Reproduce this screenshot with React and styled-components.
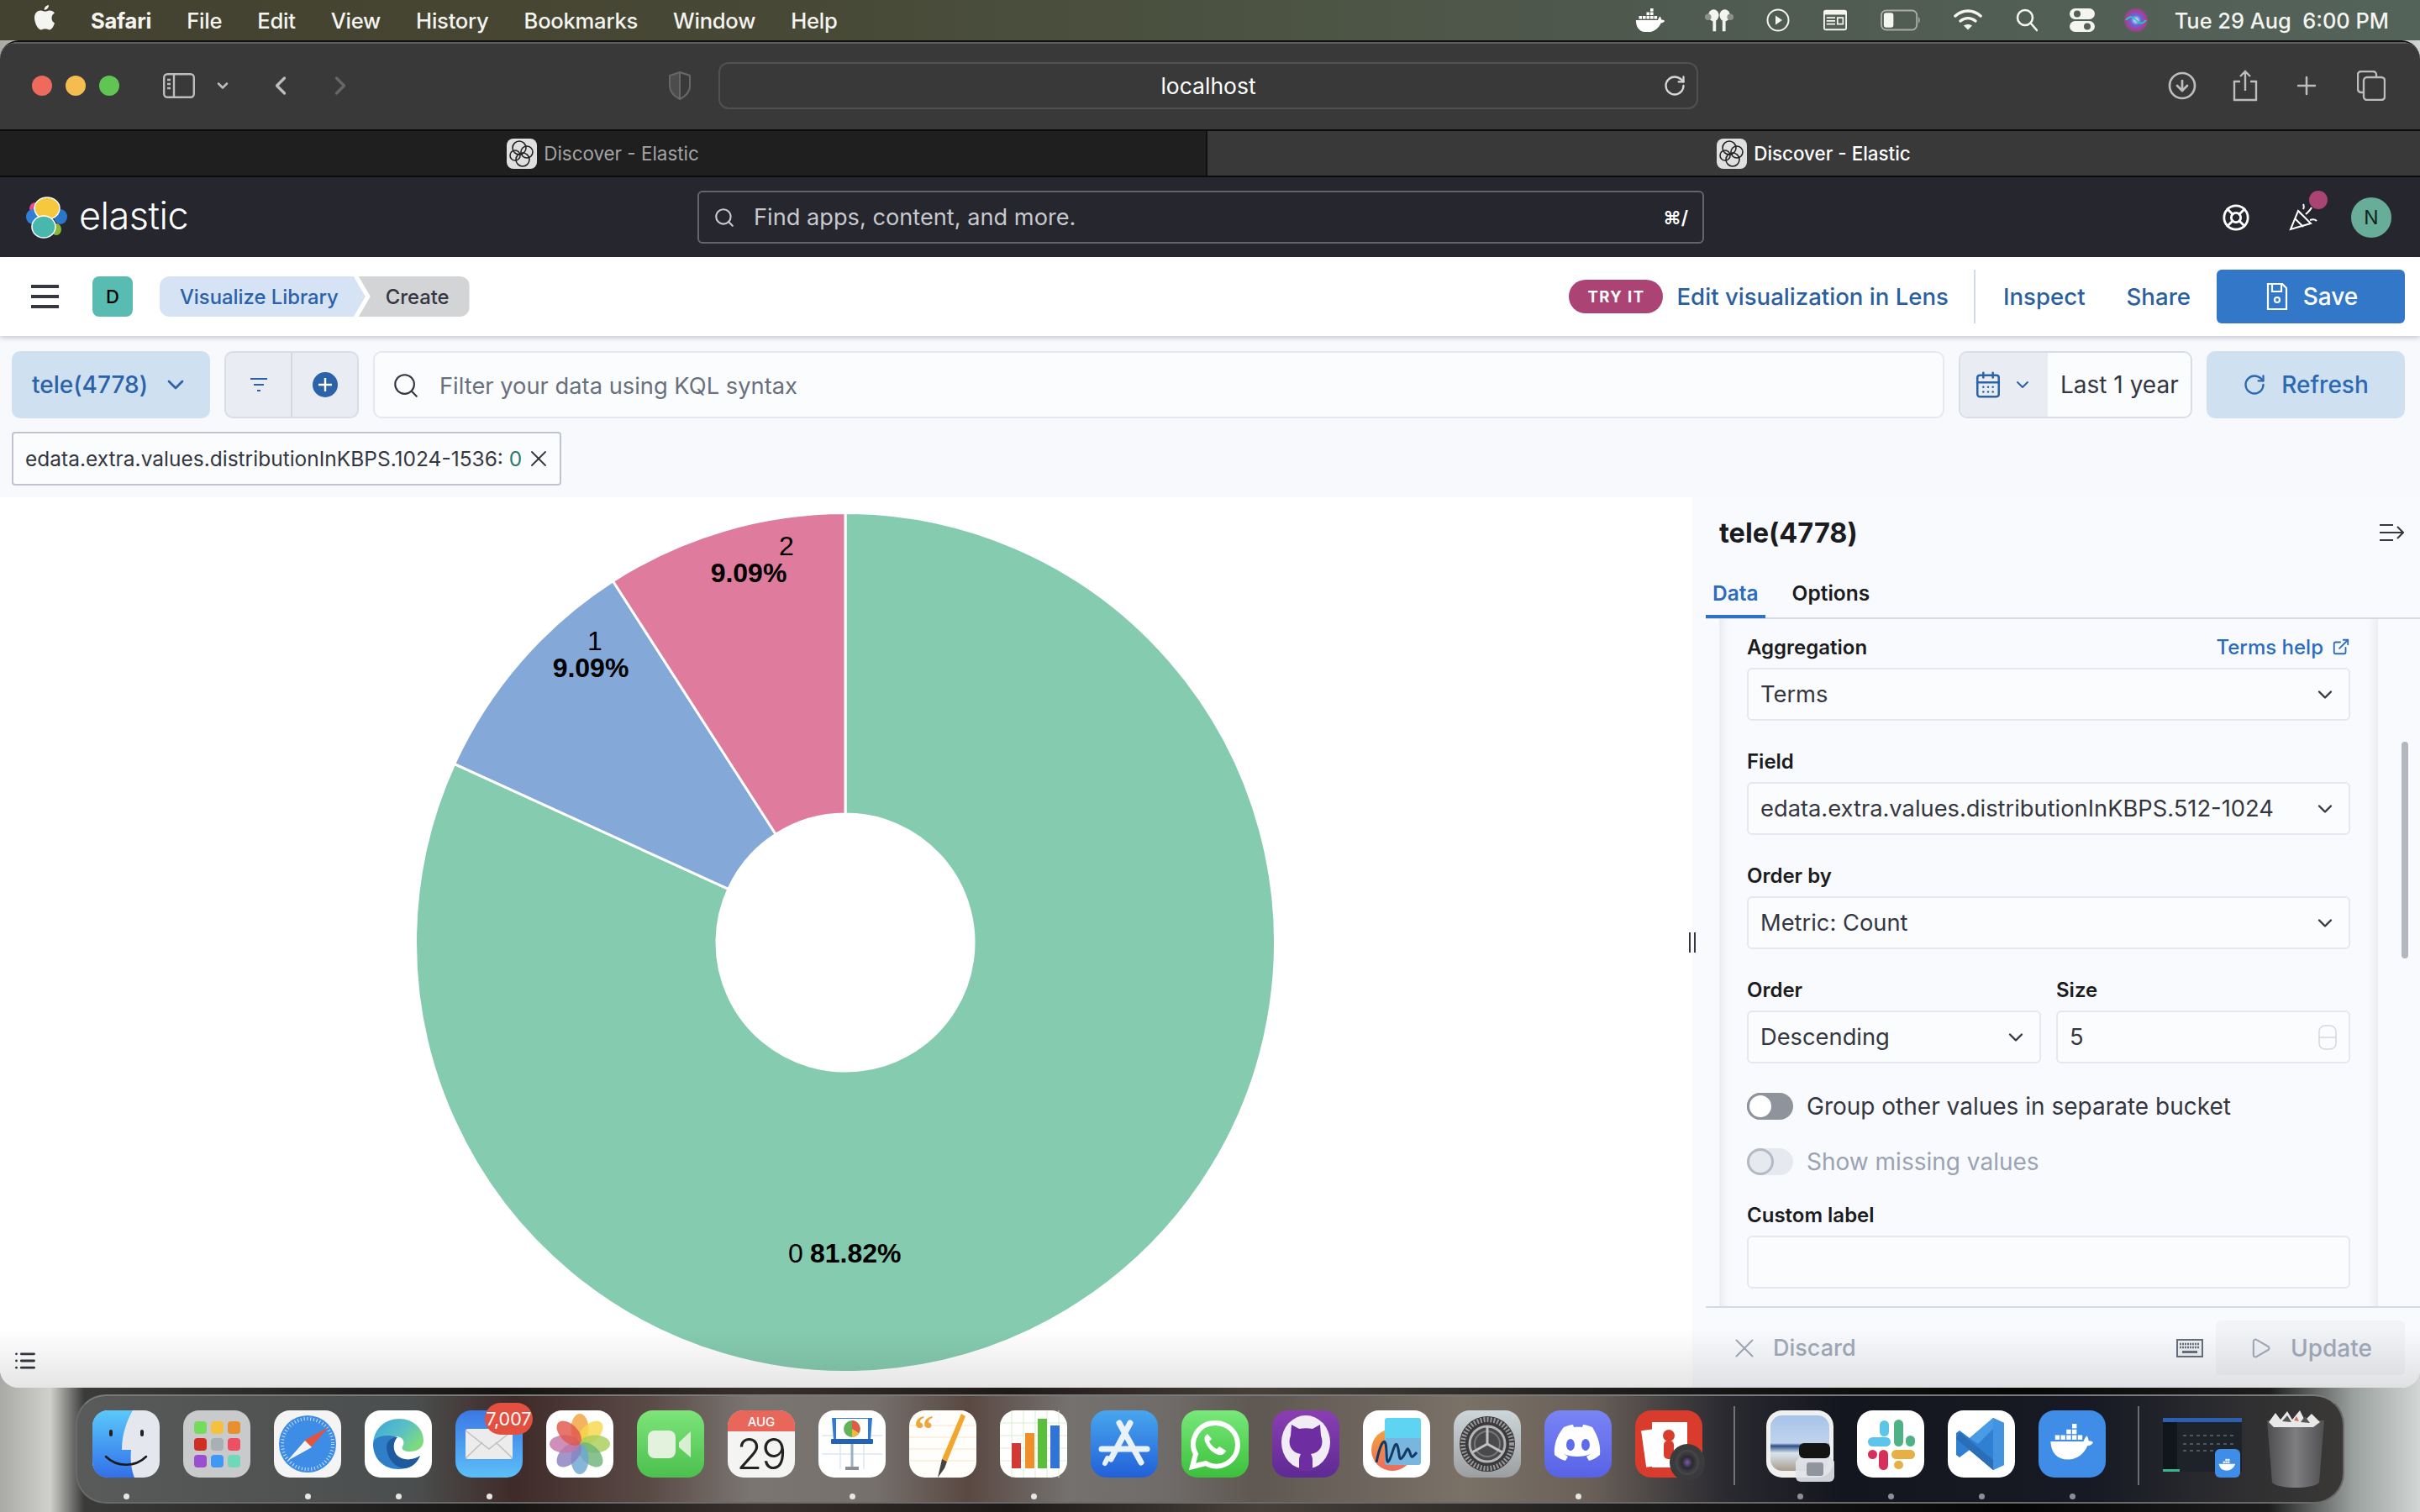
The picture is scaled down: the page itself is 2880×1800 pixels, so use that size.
import React from 'react';
import styled, { createGlobalStyle } from 'styled-components';
import {
  ChevronDown, ChevronLeft, ChevronRight, Search, RotateCw, Plus, CircleArrowDown,
  LifeBuoy, ExternalLink, X, Play, CalendarDays, List,
} from 'lucide-react';

const GlobalStyle = createGlobalStyle`
  html, body { margin: 0; padding: 0; width: 2880px; height: 1800px; overflow: hidden; }
  body { font-family: Inter, "Liberation Sans", sans-serif; }
  * { box-sizing: border-box; }
`;

const Screen = styled.div`
  width: 2880px;
  height: 1800px;
  overflow: hidden;
  display: flex;
  flex-direction: column;
  background: linear-gradient(90deg, #a9a9a6 0, #d0d0cc 60px, #3b3b3a 100px, #161412 600px, #38302c 900px,
    #1e1a18 1200px, #47403a 1500px, #181818 2000px, #060606 2400px, #1d1d1d 2700px, #9aa09e 2800px, #d2d6d4 2880px);
`;

const MenuBar = styled.div`
  height: 48px;
  flex: none;
  display: flex;
  align-items: center;
  padding: 0 37px 0 40px;
  color: #f4f4f0;
  font-size: 25.6px;
  font-weight: 500;
  background: linear-gradient(90deg, #43412f 0, #474835 900px, #4c5342 1500px, #4f5a50 2000px, #54635a 2880px);
`;

const MenuItem = styled.span`
  margin-right: 42px;
  font-weight: ${(p) => (p.$bold ? 700 : 500)};
  letter-spacing: -0.25px;
`;

const MenuTray = styled.div`
  margin-left: auto;
  display: flex;
  align-items: center;
`;

const TrayItem = styled.div`
  display: flex;
  align-items: center;
  justify-content: center;
  width: ${(p) => p.$w}px;
  margin-right: ${(p) => p.$gap}px;
`;

const Clock = styled.span`
  font-size: 25.4px;
  font-weight: 500;
  white-space: pre;
`;

const Window = styled.div`
  position: relative;
  height: 1604px;
  flex: none;
  display: flex;
  flex-direction: column;
  overflow: hidden;
  border-radius: 22px;
  border-top: 2px solid #111;
  background: #fff;
`;

const Toolbar = styled.div`
  height: 104px;
  flex: none;
  display: flex;
  align-items: center;
  background: #393939;
  border-top: 2px solid #5e5e5e;
  padding: 0 0 3px 38px;
`;

const Light = styled.span`
  width: 24px;
  height: 24px;
  border-radius: 50%;
  margin-right: ${(p) => (p.$last ? 0 : 16)}px;
  background: ${(p) => p.$c};
`;

const ToolIcon = styled.div`
  display: flex;
  align-items: center;
  justify-content: center;
  flex: none;
  width: ${(p) => p.$w}px;
  margin-left: ${(p) => p.$ml || 0}px;
  color: ${(p) => p.$c || '#bdbdbd'};
`;

const UrlField = styled.div`
  position: relative;
  width: 1166px;
  height: 56px;
  margin-left: 32px;
  display: flex;
  align-items: center;
  justify-content: center;
  border: 2px solid #515151;
  border-radius: 12px;
  color: #fff;
  font-size: 26.5px;
`;

const UrlReload = styled.span`
  position: absolute;
  right: 12px;
  top: 12px;
  color: #d6d6d6;
  display: flex;
`;

const TabBar = styled.div`
  height: 57px;
  flex: none;
  display: flex;
  border-top: 2px solid #0c0c0c;
  border-bottom: 2px solid #0c0c0c;
`;

const BrowserTab = styled.div`
  width: ${(p) => (p.$active ? 1445 : 1435)}px;
  flex: none;
  display: flex;
  align-items: center;
  justify-content: center;
  gap: 8px;
  font-size: 22.4px;
  background: ${(p) => (p.$active ? '#393939' : '#1f1f1f')};
  color: ${(p) => (p.$active ? '#fff' : '#a4a4a4')};
  font-weight: ${(p) => (p.$active ? 500 : 400)};
  border-left: ${(p) => (p.$active ? '2px solid #111' : 'none')};
`;

const AppHeader = styled.div`
  height: 95px;
  flex: none;
  position: relative;
  display: flex;
  align-items: center;
  background: #25262e;
  padding-left: 30px;
  color: #fff;
`;

const LogoWord = styled.span`
  margin-left: 14px;
  font-size: 45px;
  font-weight: 300;
  letter-spacing: -0.5px;
  width: 736px;
  line-height: 1;
  padding-bottom: 4px;
`;

const GlobalSearch = styled.div`
  width: 1198px;
  height: 63px;
  display: flex;
  align-items: center;
  padding-left: 17px;
  border: 2px solid #65666b;
  border-radius: 6px;
  color: #c8c9cc;
  font-size: 27.2px;
`;

const SearchText = styled.span`
  margin-left: 22px;
  flex: 1;
`;

const ShortcutHint = styled.span`
  margin-right: 17px;
  color: #fff;
  font-size: 22px;
  font-weight: 600;
`;

const HeaderIcons = styled.div`
  margin-left: auto;
  display: flex;
  align-items: center;
  padding-right: 34px;
`;

const CheerWrap = styled.div`
  position: relative;
  margin-left: 46px;
  display: flex;
`;

const CheerDot = styled.span`
  position: absolute;
  right: -10px;
  top: -14px;
  width: 22px;
  height: 22px;
  border-radius: 50%;
  background: #ab4474;
`;

const UserAvatar = styled.div`
  width: 48px;
  height: 48px;
  margin-left: 38px;
  border-radius: 50%;
  background: #68ad98;
  color: #10231d;
  font-size: 23px;
  display: flex;
  align-items: center;
  justify-content: center;
`;

const NavBar = styled.div`
  height: 94px;
  flex: none;
  display: flex;
  align-items: center;
  padding: 0 18px 0 37px;
  background: #fff;
  box-shadow: 0 2px 6px rgba(60, 70, 90, 0.28);
  position: relative;
  z-index: 2;
`;

const SpaceAvatar = styled.div`
  width: 48px;
  height: 48px;
  margin-left: 40px;
  border-radius: 8px;
  background: #58bcb2;
  color: #000;
  font-size: 22px;
  font-weight: 500;
  display: flex;
  align-items: center;
  justify-content: center;
`;

const Crumb = styled.div`
  height: 48px;
  display: flex;
  align-items: center;
  font-size: 23.8px;
  font-weight: 500;
  background: ${(p) => (p.$first ? '#d5e3f4' : '#d3d4d6')};
  color: ${(p) => (p.$first ? '#2b61a8' : '#343741')};
  border-radius: ${(p) => (p.$first ? '12px 0 0 12px' : '0 12px 12px 0')};
  margin-left: ${(p) => (p.$first ? '32px' : '-8px')};
  padding: ${(p) => (p.$first ? '0 32px 0 24px' : '0 24px 0 32px')};
  clip-path: ${(p) => (p.$first
    ? 'polygon(0 0, calc(100% - 14px) 0, 100% 50%, calc(100% - 14px) 100%, 0 100%)'
    : 'polygon(0 0, 100% 0, 100% 100%, 0 100%, 14px 50%)')};
`;

const NavActions = styled.div`
  margin-left: auto;
  display: flex;
  align-items: center;
  color: #2b5f9f;
  font-size: 27.6px;
  font-weight: 500;
`;

const TryBadge = styled.span`
  width: 112px;
  height: 40px;
  border-radius: 20px;
  background: #ab4474;
  color: #fff;
  font-size: 18.5px;
  font-weight: 700;
  letter-spacing: 1.4px;
  display: flex;
  align-items: center;
  justify-content: center;
  margin-right: 16px;
`;

const NavDivider = styled.span`
  width: 2px;
  height: 64px;
  background: #d3dae6;
  margin: 0 33px 0 30px;
`;

const ShareLink = styled.span`
  margin-left: 49px;
`;

const SaveButton = styled.div`
  width: 224px;
  height: 64px;
  margin-left: 31px;
  padding-left: 3px;
  border-radius: 6px;
  background: #3377c9;
  color: #fff;
  display: flex;
  align-items: center;
  justify-content: center;
  gap: 18px;
  font-size: 28px;
`;

const QueryArea = styled.div`
  height: 192px;
  flex: none;
  padding: 18px 18px 14px 14px;
  background: #f8f9fd;
`;

const QueryRow = styled.div`
  display: flex;
  height: 80px;
  gap: 17px;
`;

const DataViewButton = styled.div`
  width: 236px;
  border-radius: 10px;
  background: #cfe0f0;
  color: #2c62a8;
  font-size: 28px;
  font-weight: 500;
  display: flex;
  align-items: center;
  gap: 17px;
  padding-left: 24px;
`;

const FilterGroup = styled.div`
  width: 160px;
  display: flex;
  border: 2px solid #d9dde8;
  border-radius: 10px;
  background: #e9edf3;
`;

const FilterCell = styled.div`
  flex: 1;
  display: flex;
  align-items: center;
  justify-content: center;
  border-left: ${(p) => (p.$divided ? '2px solid #d3d8e2' : 'none')};
`;

const QueryInput = styled.div`
  flex: 1;
  display: flex;
  align-items: center;
  gap: 23px;
  padding: 2px 0 0 20px;
  border: 2px solid #e5e8f0;
  border-radius: 10px;
  background: #fbfcfe;
  color: #69707d;
  font-size: 27.3px;
`;

const DateGroup = styled.div`
  width: 278px;
  display: flex;
  border: 2px solid #d9dde8;
  border-radius: 10px;
  overflow: hidden;
  background: #fbfcfe;
  color: #343741;
  font-size: 28px;
`;

const DateIcons = styled.div`
  width: 104px;
  background: #e9edf3;
  display: flex;
  align-items: center;
  gap: 12px;
  padding-left: 16px;
`;

const DateText = styled.div`
  flex: 1;
  display: flex;
  align-items: center;
  padding-left: 15px;
  white-space: nowrap;
`;

const RefreshButton = styled.div`
  width: 236px;
  border-radius: 10px;
  background: #cfe0f0;
  color: #2d69b3;
  font-size: 28px;
  font-weight: 500;
  display: flex;
  align-items: center;
  justify-content: center;
  gap: 18px;
`;

const FilterPill = styled.div`
  width: 654px;
  height: 64px;
  margin-top: 16px;
  display: flex;
  align-items: center;
  gap: 4px;
  padding-left: 14px;
  border: 2px solid #bfc4d0;
  border-radius: 4px;
  background: #fbfcfe;
  color: #343741;
  font-size: 24.5px;
  white-space: nowrap;
`;

const PillValue = styled.span`
  color: #2b7a6a;
`;

const Main = styled.div`
  flex: 1;
  min-height: 0;
  display: flex;
`;

const ChartPanel = styled.div`
  position: relative;
  width: 2014px;
  flex: none;
  display: flex;
  align-items: center;
  justify-content: center;
  background: #fff;
`;

const LegendToggle = styled.span`
  position: absolute;
  left: 16px;
  bottom: 18px;
  color: #343741;
  display: flex;
`;

const ResizeGrip = styled.span`
  position: absolute;
  right: -4px;
  top: 518px;
  width: 8px;
  height: 24px;
  border-left: 2px solid #343741;
  border-right: 2px solid #343741;
`;

const SidePanel = styled.div`
  flex: 1;
  display: flex;
  flex-direction: column;
  min-width: 0;
  background: #f9fafd;
`;

const PanelTitle = styled.div`
  height: 84px;
  flex: none;
  display: flex;
  align-items: center;
  justify-content: space-between;
  padding: 0 19px 0 32px;
  color: #1a1c21;
  font-size: 32.5px;
  font-weight: 700;
`;

const Tabs = styled.div`
  height: 61px;
  flex: none;
  margin-left: 16px;
  display: flex;
  gap: 24px;
  border-bottom: 2px solid #d3dae6;
`;

const Tab = styled.div`
  padding: 0 8px;
  height: 60px;
  display: flex;
  align-items: center;
  font-size: 24.5px;
  font-weight: 600;
  color: ${(p) => (p.$active ? '#2b6cbf' : '#1a1c21')};
  border-bottom: ${(p) => (p.$active ? '4px solid #2f72c4' : 'none')};
  padding-top: ${(p) => (p.$active ? '4px' : '0')};
`;

const PanelBody = styled.div`
  position: relative;
  flex: 1;
  min-height: 0;
  overflow: hidden;
`;

const Card = styled.div`
  width: 784px;
  height: 100%;
  margin-left: 32px;
  padding: 17px 33px 0;
  box-shadow: inset 16px 0 12px -12px rgba(70, 80, 100, 0.1), inset -16px 0 12px -12px rgba(70, 80, 100, 0.1);
  display: flex;
  flex-direction: column;
`;

const ScrollThumb = styled.span`
  position: absolute;
  right: 14px;
  top: 146px;
  width: 8px;
  height: 258px;
  border-radius: 4px;
  background: #b3b7bf;
`;

const Field = styled.div`
  flex: ${(p) => (p.$half ? 1 : 'none')};
  min-width: 0;
  margin-bottom: ${(p) => (p.$gap === undefined ? 32 : p.$gap)}px;
`;

const LabelRow = styled.div`
  height: 32px;
  margin-bottom: 9px;
  display: flex;
  align-items: center;
  justify-content: space-between;
  color: #1a1c21;
  font-size: 24px;
  font-weight: 600;
`;

const HelpLink = styled.span`
  display: flex;
  align-items: center;
  gap: 10px;
  color: #2a6cbf;
  font-weight: 500;
`;

const Select = styled.div`
  height: 63px;
  display: flex;
  align-items: center;
  justify-content: space-between;
  padding: 0 14px 0 14px;
  border: 2px solid #e5e8f0;
  border-radius: 6px;
  background: #fbfcfe;
  color: #343741;
  font-size: 27.3px;
  white-space: nowrap;
`;

const TwoCols = styled.div`
  display: flex;
  gap: 18px;
`;

const Switch = styled.div`
  height: 32px;
  margin-bottom: ${(p) => p.$gap}px;
  display: flex;
  align-items: center;
  gap: 16px;
  font-size: 28px;
  color: ${(p) => (p.$off ? '#9aa3b4' : '#343741')};
`;

const SwitchTrack = styled.span`
  width: 55px;
  height: 32px;
  border-radius: 16px;
  background: ${(p) => (p.$off ? '#e6e9f0' : '#8f939c')};
  display: flex;
`;

const SwitchKnob = styled.span`
  width: 32px;
  height: 32px;
  border-radius: 50%;
  border: 3px solid ${(p) => (p.$off ? '#b4b9c4' : '#8f939c')};
  background: ${(p) => (p.$off ? '#e6e9f0' : '#fff')};
`;

const PanelFooter = styled.div`
  height: 97px;
  flex: none;
  margin-left: 16px;
  display: flex;
  align-items: center;
  padding: 0 18px 0 27px;
  border-top: 2px solid #d3dae6;
  color: #a2abba;
  font-size: 27px;
  font-weight: 500;
`;

const DiscardLabel = styled.span`
  display: flex;
  align-items: center;
  gap: 15px;
  margin-right: auto;
`;

const UpdateButton = styled.div`
  width: 225px;
  height: 65px;
  margin-left: 15px;
  border-radius: 6px;
  background: #f1f3f7;
  font-size: 28px;
  display: flex;
  align-items: center;
  justify-content: center;
  gap: 22px;
`;

const BottomShade = styled.div`
  position: absolute;
  left: 0;
  right: 0;
  bottom: 0;
  height: 70px;
  pointer-events: none;
  z-index: 3;
  background: linear-gradient(180deg, rgba(0, 0, 0, 0), rgba(0, 0, 0, 0.1));
`;

const Dock = styled.div`
  width: 2700px;
  height: 130px;
  flex: none;
  margin: 8px 0 0 90px;
  padding: 17px 0 0 18px;
  display: flex;
  gap: 28px;
  border: 2px solid #6a6a6a;
  border-top-color: #7a7a7a;
  border-radius: 36px;
  background: linear-gradient(90deg, #595a5a 0, #4b4e4e 400px, #3f2b29 520px, #5a4a46 680px, #7a7571 800px,
    #75706c 950px, #5a4842 1060px, #74716f 1180px, #6f6b68 1300px, #5f5852 1400px, #7a7167 1650px,
    #6a6058 1800px, #2a2a30 1960px, #14161f 2100px, #171a24 2400px, #2d2d30 2560px, #3a3937 2700px);
`;

const DockItem = styled.div`
  position: relative;
  width: ${(p) => p.$w || 80}px;
  flex: none;
  display: flex;
  flex-direction: column;
  align-items: center;
`;

const DockTile = styled.div`
  width: ${(p) => p.$w || 80}px;
  height: 80px;
  flex: none;
  display: flex;
  svg { overflow: visible; }
`;

const RunDot = styled.span`
  width: 7px;
  height: 7px;
  margin-top: 19px;
  border-radius: 50%;
  background: ${(p) => (p.$dim ? '#8d8f96' : '#e6e6e4')};
  visibility: ${(p) => (p.$on ? 'visible' : 'hidden')};
`;

const MailBadge = styled.span`
  position: absolute;
  left: 35px;
  top: -9px;
  width: 57px;
  height: 38px;
  border-radius: 19px;
  background: #e4503f;
  color: #fff;
  font-size: 21.5px;
  display: flex;
  align-items: center;
  justify-content: center;
`;

const DockSeparator = styled.span`
  width: 2px;
  height: 94px;
  margin: -5px ${(p) => p.$right}px 0 ${(p) => p.$left}px;
  background: rgba(255, 255, 255, 0.35);
`;

function AppleLogo() {
  return (
    <svg width="26" height="32" viewBox="0 0 26 32" fill="#f4f4f0">
      <path d="M18 1c.3 3-2.400 6-5.200 5.800C12.400 4 15 1.300 18 1zM21.500 16.500c0-3 1.600-4.800 3.500-6-1.300-2-3.500-3-5.600-3.100-2.300-.2-4.300 1.300-5.600 1.300-1.400 0-3.200-1.300-5.300-1.300C4.500 7.500 1 10.500 1 16c0 6 4 14.500 7.800 14.500 1.700 0 2.700-1.200 5-1.200s3.100 1.200 5 1.200c3 0 5.200-4.800 6.200-8-2-.9-3.500-2.900-3.500-6z" />
    </svg>
  );
}

function DockerWhale({ size = 36, color = '#fff' }) {
  return (
    <svg width={size} height={size * 0.8} viewBox="0 0 40 32" fill={color}>
      <rect x="20" y="0" width="4" height="4" />
      <rect x="15" y="5" width="4" height="4" /><rect x="20" y="5" width="4" height="4" />
      <rect x="5" y="10" width="4" height="4" /><rect x="10" y="10" width="4" height="4" />
      <rect x="15" y="10" width="4" height="4" /><rect x="20" y="10" width="4" height="4" /><rect x="25" y="10" width="4" height="4" />
      <path d="M1 15.500h29c1-3 2-4 3-5 1 1.500 1.500 3 1.500 4.500 2 0 3.500.5 4.500 1.500-1 2-3 3-5 3-3 7-9 12-18 12-10 0-15-6-15-16z" />
    </svg>
  );
}

function TrayIcons() {
  return (
    <>
      <TrayItem $w={36} $gap={46}><DockerWhale /></TrayItem>
      <TrayItem $w={36} $gap={38}>
        <svg width="38" height="28" viewBox="0 0 38 28" fill="#f4f4f0">
          <ellipse cx="12" cy="8" rx="6.500" ry="7.500" /><ellipse cx="26" cy="8" rx="6.500" ry="7.500" />
          <rect x="11" y="10" width="4" height="18" /><rect x="23" y="10" width="4" height="18" />
          <circle cx="5" cy="10" r="4" fill="#8d918a" /><circle cx="33" cy="10" r="4" fill="#8d918a" />
        </svg>
      </TrayItem>
      <TrayItem $w={28} $gap={40}>
        <svg width="28" height="28" viewBox="0 0 28 28" fill="none" stroke="#f4f4f0" strokeWidth="2">
          <circle cx="14" cy="14" r="12.500" /><path d="M11 8.500l8 5.500-8 5.500z" fill="#f4f4f0" stroke="none" />
        </svg>
      </TrayItem>
      <TrayItem $w={28} $gap={40}>
        <svg width="30" height="26" viewBox="0 0 30 26">
          <rect width="30" height="26" rx="3" fill="#f4f4f0" />
          <rect x="2" y="6" width="26" height="18" fill="#555f56" />
          <path d="M4 10h11M4 14h11M4 18h11" stroke="#f4f4f0" strokeWidth="1.800" />
          <path d="M18 10h7v8h-7z" fill="none" stroke="#f4f4f0" strokeWidth="1.800" />
        </svg>
      </TrayItem>
      <TrayItem $w={48} $gap={39}>
        <svg width="50" height="26" viewBox="0 0 50 26">
          <rect x="1" y="1" width="44" height="24" rx="6" fill="none" stroke="#a9aca6" strokeWidth="2" />
          <rect x="4" y="4" width="12" height="18" rx="3" fill="#f4f4f0" />
          <path d="M47 9c2 1 2.500 6 0 8z" fill="#a9aca6" />
        </svg>
      </TrayItem>
      <TrayItem $w={34} $gap={40}>
        <svg width="34" height="26" viewBox="0 0 34 26" fill="none" stroke="#f4f4f0" strokeWidth="3.500" strokeLinecap="round">
          <path d="M2 8c9-8 21-8 30 0" /><path d="M8 14c5.500-4.500 12.500-4.500 18 0" />
          <path d="M12 19.500l5 5 5-5c-3-2-7-2-10 0z" fill="#f4f4f0" stroke="none" />
        </svg>
      </TrayItem>
      <TrayItem $w={26} $gap={38}>
        <svg width="26" height="28" viewBox="0 0 26 28" fill="none" stroke="#f4f4f0" strokeWidth="2.600" strokeLinecap="round">
          <circle cx="11" cy="11" r="9" /><path d="M18 18l7 8" />
        </svg>
      </TrayItem>
      <TrayItem $w={30} $gap={34}>
        <svg width="30" height="28" viewBox="0 0 30 28">
          <rect width="30" height="13" rx="6.500" fill="#f4f4f0" /><circle cx="9" cy="6.500" r="4" fill="#555f56" />
          <rect y="15" width="30" height="13" rx="6.500" fill="#f4f4f0" /><circle cx="21" cy="21.500" r="4" fill="#555f56" />
        </svg>
      </TrayItem>
      <TrayItem $w={30} $gap={31}>
        <svg width="30" height="28" viewBox="0 0 30 28">
          <defs>
            <radialGradient id="siri" cx="0.5" cy="0.5" r="0.6">
              <stop offset="0" stopColor="#f4f4ff" /><stop offset="0.35" stopColor="#5b6be0" />
              <stop offset="0.7" stopColor="#b03a90" /><stop offset="1" stopColor="#2b7a66" />
            </radialGradient>
          </defs>
          <circle cx="15" cy="14" r="14" fill="url(#siri)" />
          <path d="M3 14c4-5 8-5 12 0s8 5 12 0" stroke="#2fc6b0" strokeWidth="2" fill="none" />
        </svg>
      </TrayItem>
    </>
  );
}

function ElasticLogo() {
  return (
    <svg width="50" height="50" viewBox="0 0 50 50">
      <ellipse cx="12" cy="14" rx="7" ry="7" fill="#e8488b" />
      <ellipse cx="9" cy="24" rx="8" ry="9" fill="#2f7fd6" />
      <ellipse cx="42" cy="24" rx="8" ry="9" fill="#2b76c9" />
      <ellipse cx="26" cy="14" rx="15" ry="13" fill="#f5c83e" stroke="#fff" strokeWidth="1.500" />
      <ellipse cx="37" cy="39" rx="6" ry="7" fill="#8cb838" />
      <ellipse cx="22" cy="36" rx="14" ry="13" fill="#48b8ae" stroke="#fff" strokeWidth="1.500" />
    </svg>
  );
}

function TabFavicon() {
  return (
    <svg width="36" height="36" viewBox="0 0 36 36">
      <rect width="36" height="36" rx="8" fill="#e0e0e0" />
      <g fill="none" stroke="#222" strokeWidth="1.600">
        <circle cx="15" cy="11" r="8" /><circle cx="24" cy="16" r="7" />
        <circle cx="10" cy="20" r="6" /><circle cx="19" cy="25" r="8" />
      </g>
    </svg>
  );
}

function PartyIcon() {
  return (
    <svg width="36" height="36" viewBox="0 0 36 36" fill="none" stroke="#fff" strokeWidth="2">
      <path d="M2 32L11 10l15 15z" /><path d="M7 19l10 10M11 10l4 4" />
      <path d="M20 14c3-3 5-4 7-8M25 21c3-1 6-1 8 1M17 8c1-2 1-4 0-6" />
    </svg>
  );
}

function CollapseIcon() {
  return (
    <svg width="30" height="24" viewBox="0 0 30 24" fill="none" stroke="#343741" strokeWidth="2">
      <path d="M1 3h16M1 12h28M1 21h16M22 5l7 7-7 7" />
    </svg>
  );
}

function FloppyIcon() {
  return (
    <svg width="26" height="32" viewBox="0 0 26 32" fill="none" stroke="#fff" strokeWidth="2.200">
      <path d="M2 1h17l5 5v25H2z" /><path d="M7 1v9h11V1" /><circle cx="13" cy="20" r="3" />
    </svg>
  );
}

function KeyboardIcon() {
  return (
    <svg width="32" height="22" viewBox="0 0 32 22">
      <rect width="32" height="22" fill="#69707d" />
      <rect x="2" y="2" width="28" height="18" fill="#eef0f4" />
      <path d="M4 6h24M4 10h24" stroke="#69707d" strokeWidth="2.400" strokeDasharray="2 1" />
      <rect x="7" y="14" width="18" height="3" fill="#69707d" />
    </svg>
  );
}

function Squircle({ fill }) {
  return <rect width="80" height="80" rx="19" fill={fill} />;
}

function Tile({ children }) {
  return <svg width="80" height="80" viewBox="0 0 80 80">{children}</svg>;
}

const tiles = {
  finder: (
    <Tile>
      <defs>
        <linearGradient id="fb" x1="0" y1="0" x2="0" y2="1"><stop offset="0" stopColor="#5ac8fa" /><stop offset="1" stopColor="#3270ea" /></linearGradient>
      </defs>
      <Squircle fill="#e4e8ee" />
      <path d="M19 0h29c-8 14-13 30-13 47h11c-1 12 0 23 4 33H19C8 80 0 72 0 61V19C0 8 8 0 19 0z" fill="url(#fb)" />
      <rect x="20" y="23" width="4" height="8" rx="2" fill="#222" /><rect x="57" y="23" width="4" height="8" rx="2" fill="#222" />
      <path d="M16 55c13 13 35 13 48 0" fill="none" stroke="#1c1c1c" strokeWidth="2.500" strokeLinecap="round" />
    </Tile>
  ),
  launchpad: (
    <Tile>
      <Squircle fill="#c9cacb" />
      {['#74dc5a', '#f6c23e', '#ea8f2e', '#d03024', '#a9b0b4', '#ee5062', '#9a4ed0', '#3f98f5', '#6fd8b8'].map((c, i) => (
        <rect key={c} x={13 + (i % 3) * 20} y={13 + Math.floor(i / 3) * 20} width="15" height="15" rx="4" fill={c} />
      ))}
    </Tile>
  ),
  safari: (
    <Tile>
      <Squircle fill="#f4f4f4" />
      <circle cx="40" cy="40" r="34" fill="#3d8de6" />
      <circle cx="40" cy="40" r="30" fill="none" stroke="#cfe3f8" strokeWidth="4" strokeDasharray="1 2.800" />
      <path d="M65 20L36 36l8 8z" fill="#e5533f" />
      <path d="M16 60l29-16-8-8z" fill="#f4f4f4" />
    </Tile>
  ),
  edge: (
    <Tile>
      <Squircle fill="#fff" />
      <defs>
        <linearGradient id="eg" x1="0" y1="0" x2="1" y2="0.6"><stop offset="0" stopColor="#3aa4dc" /><stop offset="0.6" stopColor="#5cc1c4" /><stop offset="1" stopColor="#7ddb7c" /></linearGradient>
      </defs>
      <path d="M10 40C11 21 25 10 41 10c17 0 29 12 29 26 0 9-8 13-16 13-6 0-11-2-9-6 3-4 2-12-9-12-13 0-26 2-26 9z" fill="url(#eg)" />
      <path d="M10 40c0 18 13 30 30 30 12 0 21-5 26-16-9 6-24 9-30 0-5-8-3-18 3-22-16-5-29 0-29 8z" fill="#2f7fc8" />
      <path d="M26 44c1 12 8 24 22 25 8-1 14-6 18-15-9 6-22 6-28-1-5-7-4-16 1-21-8 0-13 5-13 12z" fill="#1f5a9e" />
    </Tile>
  ),
  mail: (
    <Tile>
      <defs>
        <linearGradient id="mg" x1="0" y1="0" x2="0" y2="1"><stop offset="0" stopColor="#3b78e6" /><stop offset="1" stopColor="#5cbff7" /></linearGradient>
      </defs>
      <Squircle fill="url(#mg)" />
      <rect x="12" y="22" width="56" height="36" rx="3" fill="#ececec" />
      <path d="M12 24l28 22 28-22M12 57l20-19M68 57L48 38" fill="none" stroke="#bfbfbf" strokeWidth="1.500" />
    </Tile>
  ),
  photos: (
    <Tile>
      <Squircle fill="#fff" />
      {['#f2a23c', '#f6d84a', '#a8cf5a', '#6cb577', '#6ea6cf', '#8a80c0', '#c476a8', '#e0584c'].map((c, i) => (
        <ellipse key={c} cx="40" cy="22" rx="10.500" ry="18" fill={c} opacity="0.82" transform={`rotate(${i * 45} 40 40)`} />
      ))}
    </Tile>
  ),
  facetime: (
    <Tile>
      <defs>
        <linearGradient id="fg" x1="0" y1="0" x2="0" y2="1"><stop offset="0" stopColor="#7de47a" /><stop offset="1" stopColor="#4cc04e" /></linearGradient>
      </defs>
      <Squircle fill="url(#fg)" />
      <rect x="13" y="24" width="33" height="33" rx="8" fill="#e2f2dc" />
      <path d="M50 38l14-13v31L50 44z" fill="#d8efd2" />
    </Tile>
  ),
  calendar: (
    <Tile>
      <Squircle fill="#f4f4f2" />
      <path d="M19 0h42c11 0 19 8 19 19v6H0v-6C0 8 8 0 19 0z" fill="#e9665a" />
      <text x="40" y="19" textAnchor="middle" fontFamily="Inter, sans-serif" fontSize="15" fontWeight="500" fill="#fff">AUG</text>
      <text x="40" y="70" textAnchor="middle" fontFamily="Inter, sans-serif" fontSize="50" fontWeight="300" letterSpacing="-1" fill="#222">29</text>
    </Tile>
  ),
  keynote: (
    <Tile>
      <Squircle fill="#fff" />
      <path d="M4 30h72M4 52h72M26 10v60M54 10v60" stroke="#dce8f4" strokeWidth="1.500" />
      <path d="M16 9h48l-2 26H18z" fill="#2f7ad8" />
      <rect x="21" y="10" width="38" height="24" fill="#fff" />
      <circle cx="40" cy="22" r="10" fill="#63b35b" /><path d="M40 22V12a10 10 0 0 1 8 15z" fill="#e45b45" /><path d="M40 22l8 5a10 10 0 0 1-8 5z" fill="#eebb3c" />
      <rect x="15" y="34" width="50" height="6" rx="1" fill="#2461b8" />
      <rect x="38.500" y="40" width="3" height="28" fill="#9ab0c8" />
      <rect x="32" y="67" width="16" height="4" fill="#8a8f96" />
    </Tile>
  ),
  pages: (
    <Tile>
      <Squircle fill="#fffefa" />
      <path d="M0 18h80M0 32h80M0 46h80M0 60h80" stroke="#fbecd8" strokeWidth="1.500" />
      <text x="6" y="38" fontFamily="Liberation Serif, serif" fontSize="46" fontWeight="700" fill="#eda63c">“</text>
      <path d="M62 4l5 3-22 54-6-3z" fill="#f2a62e" />
      <path d="M39 58l6 3-3 8-8 11z" fill="#444" />
    </Tile>
  ),
  numbers: (
    <Tile>
      <Squircle fill="#fff" />
      <path d="M0 15h80M0 30h80M0 45h80M0 60h80M14 0v80M28 0v80M42 0v80M56 0v80M70 0v80" stroke="#d6efd0" strokeWidth="1" />
      <rect x="14" y="39" width="11" height="30" fill="#d13a34" />
      <rect x="30" y="27" width="11" height="42" fill="#ee8f2a" />
      <rect x="45" y="10" width="11" height="59" fill="#5bbf3d" />
      <rect x="60" y="18" width="11" height="51" fill="#2f74d6" />
    </Tile>
  ),
  appstore: (
    <Tile>
      <defs>
        <linearGradient id="ag" x1="0" y1="0" x2="0" y2="1"><stop offset="0" stopColor="#48a6ee" /><stop offset="1" stopColor="#2260d8" /></linearGradient>
      </defs>
      <Squircle fill="url(#ag)" />
      <path d="M47 15L24 58M34 15l26 47M13 46h54" stroke="#e9f2fb" strokeWidth="7" strokeLinecap="round" fill="none" />
      <path d="M20 57l-3 6" stroke="#e9f2fb" strokeWidth="6" strokeLinecap="round" />
    </Tile>
  ),
  whatsapp: (
    <Tile>
      <defs>
        <linearGradient id="wg" x1="0" y1="0" x2="0" y2="1"><stop offset="0" stopColor="#78e87a" /><stop offset="1" stopColor="#3cc03c" /></linearGradient>
      </defs>
      <Squircle fill="url(#wg)" />
      <path d="M13 67l4-15c-9-16 3-37 23-37 16 0 27 12 27 26 0 20-22 32-38 22z" fill="none" stroke="#fff" strokeWidth="6" />
      <path d="M31 28c-3 2-5 5-2 11 3 7 9 12 15 14 5 1 8-2 9-5l-8-5-3 3c-4-2-7-5-9-9l3-3z" fill="#fff" />
    </Tile>
  ),
  github: (
    <Tile>
      <defs>
        <linearGradient id="gg" x1="0" y1="0" x2="0" y2="1"><stop offset="0" stopColor="#8a3fb2" /><stop offset="1" stopColor="#5e2a94" /></linearGradient>
      </defs>
      <Squircle fill="url(#gg)" />
      <ellipse cx="40" cy="38" rx="29" ry="32" fill="#f2ecf6" />
      <path d="M22 30l1-13 9 5c5-1 11-1 16 0l9-5 1 13c4 10 0 20-12 22 1 2 2 4 2 7v13H32V59c0-3 1-5 2-7-12-2-16-12-12-22z" fill="#6e2da0" />
    </Tile>
  ),
  freeform: (
    <Tile>
      <defs>
        <linearGradient id="ff" x1="0" y1="0" x2="0" y2="1"><stop offset="0" stopColor="#f2a43c" /><stop offset="1" stopColor="#ee6a5e" /></linearGradient>
      </defs>
      <Squircle fill="#fff" />
      <circle cx="35" cy="47" r="25" fill="url(#ff)" />
      <rect x="26" y="9" width="43" height="44" rx="3" fill="#5fd3f2" />
      <rect x="26" y="33" width="43" height="32" rx="3" fill="#78b6e0" />
      <path d="M16 62c4-20 9-30 11-22s0 26 4 20 7-26 10-18 1 20 6 14 5-14 8-8 1 12 9 2" fill="none" stroke="#143a63" strokeWidth="3" />
    </Tile>
  ),
  settings: (
    <Tile>
      <defs>
        <linearGradient id="sg" x1="0" y1="0" x2="0" y2="1"><stop offset="0" stopColor="#cdd6da" /><stop offset="1" stopColor="#9c9fa2" /></linearGradient>
      </defs>
      <Squircle fill="url(#sg)" />
      <circle cx="40" cy="40" r="33" fill="#3a3a3c" />
      <circle cx="40" cy="40" r="29" fill="none" stroke="#9a9a9d" strokeWidth="6" strokeDasharray="2 2" />
      <circle cx="40" cy="40" r="21" fill="#4a4a4c" stroke="#b5b5b8" strokeWidth="3" />
      <circle cx="40" cy="40" r="15" fill="none" stroke="#77777a" strokeWidth="2" />
      <path d="M40 40V19M40 40l18 10M40 40L22 50" stroke="#c2c2c4" strokeWidth="3" />
    </Tile>
  ),
  discord: (
    <Tile>
      <defs>
        <linearGradient id="dg" x1="0" y1="0" x2="0" y2="1"><stop offset="0" stopColor="#7a84f6" /><stop offset="1" stopColor="#5763e6" /></linearGradient>
      </defs>
      <Squircle fill="url(#dg)" />
      <path d="M23 20c5-2 9-3 11-3l1 3c3-.4 7-.4 10 0l1-3c2 0 6 1 11 3 7 11 10 22 9 33-5 4-9 6-13 7l-3-5 5-3c-9 4-23 4-32 0l5 3-3 5c-4-1-8-3-13-7-1-11 2-22 11-33z" fill="#fff" />
      <ellipse cx="31" cy="41" rx="5" ry="7" fill="#5f6bea" /><ellipse cx="49" cy="41" rx="5" ry="7" fill="#5f6bea" />
    </Tile>
  ),
  booth: (
    <Tile>
      <defs>
        <radialGradient id="cam" cx="0.5" cy="0.5" r="0.5"><stop offset="0" stopColor="#7c5aa8" /><stop offset="0.45" stopColor="#2a2a30" /><stop offset="1" stopColor="#4a4a4c" /></radialGradient>
      </defs>
      <Squircle fill="#d93c2c" />
      <rect x="10" y="22" width="30" height="44" fill="#fff" transform="rotate(-8 25 44)" />
      <rect x="20" y="14" width="42" height="54" fill="#fff" />
      <circle cx="40" cy="30" r="7" fill="#d93c2c" /><rect x="34" y="36" width="12" height="22" rx="5" fill="#d93c2c" />
      <ellipse cx="62" cy="62" rx="21" ry="22" fill="#3b3b3d" />
      <ellipse cx="62" cy="62" rx="14" ry="15" fill="url(#cam)" />
    </Tile>
  ),
  preview: (
    <Tile>
      <defs>
        <linearGradient id="pg" x1="0" y1="0" x2="0" y2="1"><stop offset="0" stopColor="#a7c3ea" /><stop offset="0.5" stopColor="#c0d3ec" /><stop offset="0.55" stopColor="#2d4f88" /><stop offset="0.68" stopColor="#d9e6ee" /><stop offset="1" stopColor="#a89c8c" /></linearGradient>
      </defs>
      <Squircle fill="#f0f0f0" />
      <rect x="5" y="6" width="70" height="66" rx="14" fill="url(#pg)" />
      <path d="M40 55h36l5 6v18a6 6 0 0 1-6 6H41a6 6 0 0 1-6-6V61z" fill="#dfe3e8" opacity="0.92" />
      <rect x="48" y="62" width="20" height="16" rx="3" fill="#8f959c" />
      <rect x="39" y="39" width="37" height="18" rx="6" fill="#141414" />
    </Tile>
  ),
  slack: (
    <Tile>
      <Squircle fill="#fff" />
      <rect x="13" y="32" width="27" height="11" rx="5.500" fill="#5ec5ea" /><rect x="27" y="12" width="11" height="19" rx="5.500" fill="#5ec5ea" />
      <rect x="44" y="11" width="11" height="32" rx="5.500" fill="#4fb286" /><rect x="58" y="30" width="11" height="13" rx="5.500" fill="#4fb286" />
      <rect x="41" y="47" width="28" height="11" rx="5.500" fill="#e5b146" /><rect x="44" y="60" width="11" height="10" rx="5" fill="#e5b146" />
      <rect x="26" y="47" width="11" height="24" rx="5.500" fill="#d6305a" /><rect x="13" y="47" width="11" height="11" rx="5.500" fill="#d6305a" />
    </Tile>
  ),
  vscode: (
    <Tile>
      <Squircle fill="#fff" />
      <path d="M54 9l13 6v50l-13 6-28-24-12 9-4-3v-26l4-3 12 9z" fill="#2f7fd3" />
      <path d="M54 9l13 6v50l-13 6z" fill="#4393e0" />
      <path d="M14 26l40 33v12L10 34z" fill="#2a6eb8" />
      <path d="M54 22L36 40 26 33l28-24z" fill="#4a9be6" />
    </Tile>
  ),
  docker: (
    <svg width="80" height="80" viewBox="0 0 80 80">
      <Squircle fill="#3f8de6" />
      <g transform="translate(13 16) scale(1.350)" fill="#fff">
        <rect x="20" y="0" width="4" height="4" />
        <rect x="15" y="5" width="4" height="4" /><rect x="20" y="5" width="4" height="4" />
        <rect x="5" y="10" width="4" height="4" /><rect x="10" y="10" width="4" height="4" />
        <rect x="15" y="10" width="4" height="4" /><rect x="20" y="10" width="4" height="4" /><rect x="25" y="10" width="4" height="4" />
        <path d="M1 15.500h29c1-3 2-4 3-5 1 1.500 1.500 3 1.500 4.500 2 0 3.500.5 4 1.500-1 2-3 3-5 3-3 7-9 12-17 12-10 0-15-6-15.500-16z" />
      </g>
    </svg>
  ),
};

const dockApps = [
  { id: 'finder', on: true }, { id: 'launchpad' }, { id: 'safari', on: true }, { id: 'edge', on: true },
  { id: 'mail', on: true, badge: '7,007' }, { id: 'photos' }, { id: 'facetime' }, { id: 'calendar' },
  { id: 'keynote', on: true }, { id: 'pages' }, { id: 'numbers', on: true }, { id: 'appstore' },
  { id: 'whatsapp' }, { id: 'github' }, { id: 'freeform' }, { id: 'settings' },
  { id: 'discord', on: true }, { id: 'booth' },
];

const dockRecent = ['preview', 'slack', 'vscode', 'docker'];

function DockApp({ id, on, badge, dim }) {
  return (
    <DockItem>
      <DockTile>{tiles[id]}</DockTile>
      <RunDot $on={on} $dim={dim} />
      {badge && <MailBadge>{badge}</MailBadge>}
    </DockItem>
  );
}

function WindowThumb() {
  return (
    <svg width="94" height="80" viewBox="0 0 94 80">
      <rect x="0" y="9" width="94" height="64" fill="#1d2329" />
      <rect x="0" y="9" width="94" height="5" fill="#2b5fb0" />
      <rect x="0" y="14" width="17" height="59" fill="#11161b" />
      <path d="M24 30h60M24 40h60M24 48h60" stroke="#5c6a78" strokeWidth="1.500" strokeDasharray="4 4" />
      <rect x="0" y="70" width="20" height="3" fill="#39b58c" />
      <rect x="62" y="46" width="30" height="34" rx="6" fill="#3f8de6" />
      <g transform="translate(66 55) scale(.56)" fill="#fff">
        <rect x="15" y="5" width="4" height="4" /><rect x="20" y="5" width="4" height="4" />
        <rect x="10" y="10" width="4" height="4" /><rect x="15" y="10" width="4" height="4" /><rect x="20" y="10" width="4" height="4" />
        <path d="M1 15.500h35c-3 8-9 14-18 14-10 0-15-5-17-14z" />
      </g>
    </svg>
  );
}

function TrashCan() {
  return (
    <svg width="72" height="92" viewBox="0 0 72 92">
      <defs>
        <linearGradient id="tg" x1="0" y1="0" x2="1" y2="0"><stop offset="0" stopColor="#4e4e50" /><stop offset="0.5" stopColor="#7e7e80" /><stop offset="1" stopColor="#505052" /></linearGradient>
      </defs>
      <path d="M2 12h68l-6 74c-8 8-48 8-56 0z" fill="url(#tg)" />
      <path d="M4 14l8-11 6 8 8-10 6 10 9-11 6 12 8-8 10 10-8 6H10z" fill="#e8e8e8" />
      <path d="M20 13l6-7 5 8zM42 14l5-7 6 8z" fill="#555" />
      <path d="M34 12l3-5 3 6z" fill="#d0705a" />
    </svg>
  );
}

function PieChart() {
  const cx = 1006;
  const cy = 1122;
  const r = 511.5;
  const inner = 153;
  const point = (deg, rad) => {
    const a = (deg - 90) * Math.PI / 180;
    return `${cx + rad * Math.cos(a)} ${cy + rad * Math.sin(a)}`;
  };
  const slice = (from, to, fill) => (
    <path
      d={`M${point(from, inner)} L${point(from, r)} A${r} ${r} 0 ${to - from > 180 ? 1 : 0} 1 ${point(to, r)} L${point(to, inner)} A${inner} ${inner} 0 ${to - from > 180 ? 1 : 0} 0 ${point(from, inner)}Z`}
      fill={fill}
      stroke="#fff"
      strokeWidth="3"
    />
  );
  const regular = { fontFamily: '"Liberation Sans", sans-serif', fontSize: 32, fill: '#000' };
  const bold = { ...regular, fontWeight: 700 };
  return (
    <svg width="1040" height="1040" viewBox="487 602 1040 1040">
      {slice(0, 294.55, '#85cbb0')}
      {slice(294.55, 327.27, '#84a8d8')}
      {slice(327.27, 360, '#df7c9e')}
      <text x="936" y="661" textAnchor="middle" {...regular}>2</text>
      <text x="891" y="693" textAnchor="middle" {...bold}>9.09%</text>
      <text x="708" y="774" textAnchor="middle" {...regular}>1</text>
      <text x="703" y="806" textAnchor="middle" {...bold}>9.09%</text>
      <text x="938" y="1503" {...regular}>0</text>
      <text x="964" y="1503" {...bold}>81.82%</text>
    </svg>
  );
}

function StepperIcon() {
  return (
    <svg width="22" height="30" viewBox="0 0 22 30" fill="none" stroke="#d3d7df" strokeWidth="1.500">
      <rect x="1" y="1" width="20" height="28" rx="7" /><path d="M1 15h20" />
    </svg>
  );
}

function HamburgerIcon() {
  return (
    <svg width="33" height="28" viewBox="0 0 33 28" fill="#343741">
      <rect width="33" height="4" y="0" /><rect width="33" height="4" y="12" /><rect width="33" height="4" y="24" />
    </svg>
  );
}

function FilterLines() {
  return (
    <svg width="22" height="18" viewBox="0 0 22 18" fill="none" stroke="#2c62a8" strokeWidth="2">
      <path d="M1 2h20M5 9h12M9 16h4" />
    </svg>
  );
}

function AddFilter() {
  return (
    <svg width="30" height="30" viewBox="0 0 30 30">
      <circle cx="15" cy="15" r="15" fill="#2c62a8" />
      <path d="M15 7v16M7 15h16" stroke="#fff" strokeWidth="2.400" />
    </svg>
  );
}

function SidebarIcon() {
  return (
    <svg width="38" height="30" viewBox="0 0 38 30" fill="none" stroke="#bdbdbd" strokeWidth="2.400">
      <rect x="1.200" y="1.200" width="35.600" height="27.600" rx="4" /><path d="M13 1v28M5 8h4M5 13h4M5 18h4" />
    </svg>
  );
}

function ShieldIcon() {
  return (
    <svg width="28" height="34" viewBox="0 0 28 34">
      <path d="M14 1l12 4v12c0 8-6 13-12 16C8 30 2 25 2 17V5z" fill="#4c4c4c" stroke="#666" strokeWidth="2" />
      <path d="M14 1l12 4v12c0 8-6 13-12 16z" fill="#393939" stroke="#666" strokeWidth="2" />
    </svg>
  );
}

function ShareIcon() {
  return (
    <svg width="30" height="38" viewBox="0 0 30 38" fill="none" stroke="#bdbdbd" strokeWidth="2.400">
      <path d="M9 14H2v22h26V14h-7M15 25V2M9 8l6-6 6 6" />
    </svg>
  );
}

function TabsIcon() {
  return (
    <svg width="34" height="36" viewBox="0 0 34 36" fill="none" stroke="#bdbdbd" strokeWidth="2.400">
      <rect x="8" y="8" width="25" height="27" rx="4" /><path d="M8 26H5a4 4 0 0 1-4-4V5a4 4 0 0 1 4-4h14a4 4 0 0 1 4 4v3" />
    </svg>
  );
}

export default function App() {
  return (
    <Screen>
      <GlobalStyle />
      <MenuBar>
        <MenuItem><AppleLogo /></MenuItem>
        <MenuItem $bold>Safari</MenuItem>
        <MenuItem>File</MenuItem>
        <MenuItem>Edit</MenuItem>
        <MenuItem>View</MenuItem>
        <MenuItem>History</MenuItem>
        <MenuItem>Bookmarks</MenuItem>
        <MenuItem>Window</MenuItem>
        <MenuItem>Help</MenuItem>
        <MenuTray>
          <TrayIcons />
          <Clock>Tue 29 Aug  6:00 PM</Clock>
        </MenuTray>
      </MenuBar>

      <Window>
        <Toolbar>
          <Light $c="#ee6a5f" />
          <Light $c="#f5bd4f" />
          <Light $c="#61c554" $last />
          <ToolIcon $w={38} $ml={52}><SidebarIcon /></ToolIcon>
          <ToolIcon $w={20} $ml={23}><ChevronDown size={20} strokeWidth={3} /></ToolIcon>
          <ToolIcon $w={36} $ml={41}><ChevronLeft size={38} strokeWidth={2.2} /></ToolIcon>
          <ToolIcon $w={36} $ml={35} $c="#666"><ChevronRight size={38} strokeWidth={2.2} /></ToolIcon>
          <ToolIcon $w={28} $ml={372}><ShieldIcon /></ToolIcon>
          <UrlField>
            localhost
            <UrlReload><RotateCw size={28} strokeWidth={2} /></UrlReload>
          </UrlField>
          <ToolIcon $w={36} $ml={558}><CircleArrowDown size={36} strokeWidth={1.8} /></ToolIcon>
          <ToolIcon $w={30} $ml={42}><ShareIcon /></ToolIcon>
          <ToolIcon $w={34} $ml={41}><Plus size={36} strokeWidth={1.8} /></ToolIcon>
          <ToolIcon $w={34} $ml={43}><TabsIcon /></ToolIcon>
        </Toolbar>

        <TabBar>
          <BrowserTab><TabFavicon />Discover - Elastic</BrowserTab>
          <BrowserTab $active><TabFavicon />Discover - Elastic</BrowserTab>
        </TabBar>

        <AppHeader>
          <ElasticLogo />
          <LogoWord>elastic</LogoWord>
          <GlobalSearch>
            <Search size={26} strokeWidth={2} />
            <SearchText>Find apps, content, and more.</SearchText>
            <ShortcutHint>⌘/</ShortcutHint>
          </GlobalSearch>
          <HeaderIcons>
            <LifeBuoy size={34} strokeWidth={2} />
            <CheerWrap><PartyIcon /><CheerDot /></CheerWrap>
            <UserAvatar>N</UserAvatar>
          </HeaderIcons>
        </AppHeader>

        <NavBar>
          <HamburgerIcon />
          <SpaceAvatar>D</SpaceAvatar>
          <Crumb $first>Visualize Library</Crumb>
          <Crumb>Create</Crumb>
          <NavActions>
            <TryBadge>TRY IT</TryBadge>
            <span>Edit visualization in Lens</span>
            <NavDivider />
            <span>Inspect</span>
            <ShareLink>Share</ShareLink>
            <SaveButton><FloppyIcon />Save</SaveButton>
          </NavActions>
        </NavBar>

        <QueryArea>
          <QueryRow>
            <DataViewButton>tele(4778)<ChevronDown size={32} strokeWidth={2} /></DataViewButton>
            <FilterGroup>
              <FilterCell><FilterLines /></FilterCell>
              <FilterCell $divided><AddFilter /></FilterCell>
            </FilterGroup>
            <QueryInput>
              <Search size={34} color="#343741" strokeWidth={1.5} />
              Filter your data using KQL syntax
            </QueryInput>
            <DateGroup>
              <DateIcons>
                <CalendarDays size={34} color="#2c62a8" strokeWidth={1.8} />
                <ChevronDown size={24} color="#2c62a8" strokeWidth={2} />
              </DateIcons>
              <DateText>Last 1 year</DateText>
            </DateGroup>
            <RefreshButton><RotateCw size={28} strokeWidth={2} />Refresh</RefreshButton>
          </QueryRow>
          <FilterPill>
            <span>edata.extra.values.distributionInKBPS.1024-1536: <PillValue>0</PillValue></span>
            <X size={32} strokeWidth={1.4} />
          </FilterPill>
        </QueryArea>

        <Main>
          <ChartPanel>
            <PieChart />
            <LegendToggle><List size={28} strokeWidth={2.4} /></LegendToggle>
            <ResizeGrip />
          </ChartPanel>
          <SidePanel>
            <PanelTitle>tele(4778)<CollapseIcon /></PanelTitle>
            <Tabs>
              <Tab $active>Data</Tab>
              <Tab>Options</Tab>
            </Tabs>
            <PanelBody>
              <Card>
                <Field>
                  <LabelRow>
                    Aggregation
                    <HelpLink>Terms help<ExternalLink size={22} strokeWidth={2} /></HelpLink>
                  </LabelRow>
                  <Select>Terms<ChevronDown size={28} strokeWidth={2} /></Select>
                </Field>
                <Field>
                  <LabelRow>Field</LabelRow>
                  <Select>edata.extra.values.distributionInKBPS.512-1024<ChevronDown size={28} strokeWidth={2} /></Select>
                </Field>
                <Field>
                  <LabelRow>Order by</LabelRow>
                  <Select>Metric: Count<ChevronDown size={28} strokeWidth={2} /></Select>
                </Field>
                <TwoCols>
                  <Field $half $gap={35}>
                    <LabelRow>Order</LabelRow>
                    <Select>Descending<ChevronDown size={28} strokeWidth={2} /></Select>
                  </Field>
                  <Field $half $gap={35}>
                    <LabelRow>Size</LabelRow>
                    <Select>5<StepperIcon /></Select>
                  </Field>
                </TwoCols>
                <Switch $gap={34}>
                  <SwitchTrack><SwitchKnob /></SwitchTrack>
                  Group other values in separate bucket
                </Switch>
                <Switch $off $gap={31}>
                  <SwitchTrack $off><SwitchKnob $off /></SwitchTrack>
                  Show missing values
                </Switch>
                <Field>
                  <LabelRow>Custom label</LabelRow>
                  <Select />
                </Field>
              </Card>
              <ScrollThumb />
            </PanelBody>
            <PanelFooter>
              <DiscardLabel><X size={38} strokeWidth={1.3} />Discard</DiscardLabel>
              <KeyboardIcon />
              <UpdateButton><Play size={28} strokeWidth={1.8} />Update</UpdateButton>
            </PanelFooter>
          </SidePanel>
        </Main>
        <BottomShade />
      </Window>

      <Dock>
        {dockApps.map((app) => <DockApp key={app.id} {...app} />)}
        <DockSeparator $left={9} $right={9} />
        {dockRecent.map((id) => <DockApp key={id} id={id} on dim />)}
        <DockSeparator $left={10} $right={0} />
        <DockItem $w={94}><DockTile $w={94}><WindowThumb /></DockTile></DockItem>
        <DockItem $w={72}><DockTile $w={72}><TrashCan /></DockTile></DockItem>
      </Dock>
    </Screen>
  );
}
